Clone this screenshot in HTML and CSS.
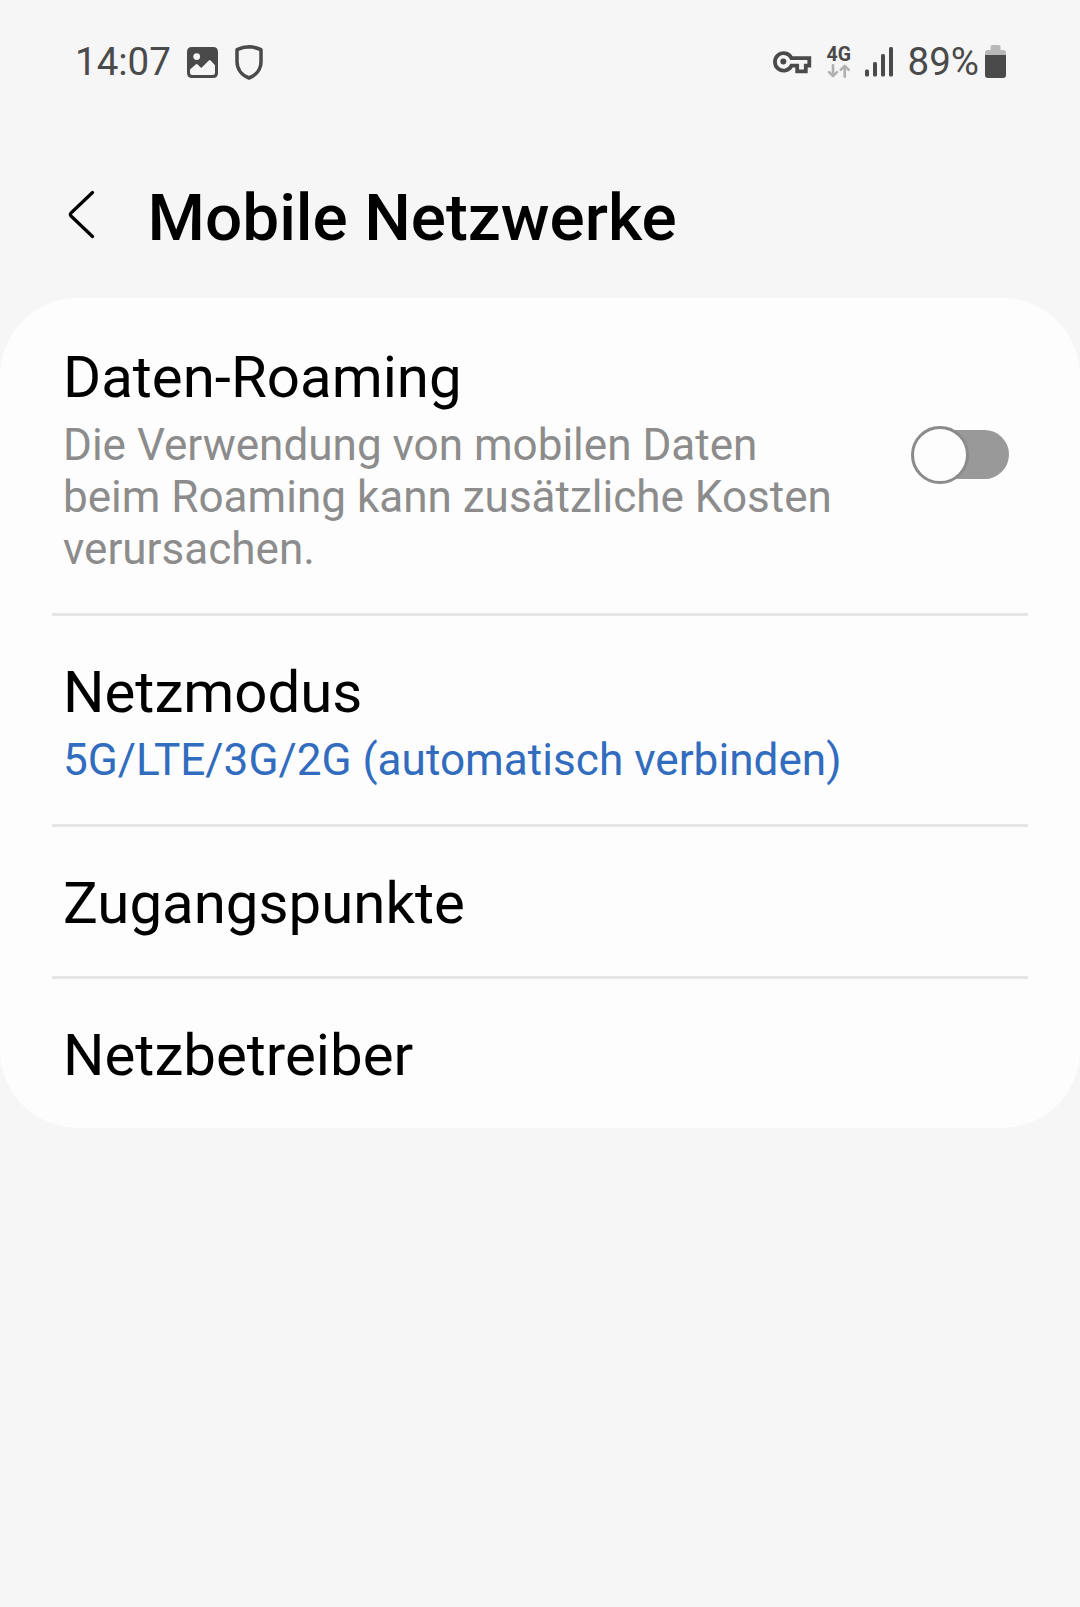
FILE: index.html
```html
<!DOCTYPE html>
<html lang="de">
<head>
<meta charset="utf-8">
<title>Mobile Netzwerke</title>
<link rel="stylesheet" href="styles.css">
</head>
<body>
<div class="status">
  <div class="status-left">
    <span class="clock">14:07</span>
    <svg class="icon-image" width="31" height="31" viewBox="0 0 31 31"><path fill="#4a4a4a" fill-rule="evenodd" d="M5 0H26Q31 0 31 5V26Q31 31 26 31H5Q0 31 0 26V5Q0 0 5 0ZM9.700 6.200a3.400 3.400 0 1 0 0 6.800a3.400 3.400 0 1 0 0-6.800ZM3 22.500V25.500Q3 28 5.500 28H25.500Q28 28 28 25.500V18.200L23.600 13.500Q22.700 12.700 21.800 13.500L14.300 21L10.700 17.500Q9.700 16.700 8.700 17.500Z"/></svg>
    <svg class="icon-shield" width="28" height="35" viewBox="0 0 28 35"><path fill="none" stroke="#4a4a4a" stroke-width="3.500" stroke-linejoin="round" d="M14 1.800Q20 1.900 26 4.700V16.500C26 24 21.500 30.200 14 33C6.500 30.200 2 24 2 16.500V4.700Q8 1.900 14 1.800Z"/></svg>
  </div>
  <div class="status-right">
    <svg class="icon-key" width="39" height="23" viewBox="0 0 39 23"><path fill="none" stroke="#4a4a4a" stroke-width="3.800" d="M18.500 7.200H36.300V14.600H32.800V20.300H24.200V14.600H18.500A8.700 8.700 0 1 1 18.500 7.200Z"/><circle cx="10.300" cy="10.600" r="3" fill="#4a4a4a"/></svg>
    <div class="network">
      <span class="network-type">4G</span>
      <svg width="24" height="14" viewBox="0 0 24 14" fill="none" stroke="#b0b0b0" stroke-width="2.600" stroke-linecap="round" stroke-linejoin="round"><path d="M6 1.300V12M2 8.200L6 12.200L10 8.200M17.700 12.700V2M13.700 5.800L17.700 1.800L21.700 5.800"/></svg>
    </div>
    <svg class="icon-signal" width="28" height="30" viewBox="0 0 28 30" fill="#4a4a4a"><rect y="22.500" width="4" height="7" rx="1.500"/><rect x="8" y="15" width="4" height="14.500" rx="1.500"/><rect x="16" y="7" width="4" height="22.500" rx="1.500"/><rect x="24" y="0" width="4" height="29.500" rx="1.500"/></svg>
    <span class="percent">89%</span>
    <svg class="icon-battery" width="21" height="33" viewBox="0 0 21 33"><path fill="#b8b8b8" d="M0 11V8Q0 5 3 5H5.500V2Q5.500 0 7.500 0H13.500Q15.500 0 15.500 2V5H18Q21 5 21 8V11Z"/><path fill="#4a4a4a" d="M0 10H21V30Q21 33 18 33H3Q0 33 0 30Z"/></svg>
  </div>
</div>
<header class="header">
  <svg class="back" width="28" height="50" viewBox="0 0 28 50"><path fill="none" stroke="#000" stroke-width="3.200" stroke-linecap="round" stroke-linejoin="round" d="M24.500 2.500L3 23Q1.700 24.500 3 26L24.500 46.500"/></svg>
  <h1 class="title">Mobile Netzwerke</h1>
</header>
<main class="card">
  <section class="row">
    <div class="row-text">
      <h2 class="row-title">Daten-Roaming</h2>
      <p class="row-sub">Die Verwendung von mobilen Daten beim Roaming kann zusätzliche Kosten verursachen.</p>
    </div>
    <div class="toggle"><div class="knob"></div></div>
  </section>
  <section class="row">
    <div class="row-text">
      <h2 class="row-title">Netzmodus</h2>
      <p class="row-sub row-value">5G/LTE/3G/2G (automatisch verbinden)</p>
    </div>
  </section>
  <section class="row row-single"><h2 class="row-title">Zugangspunkte</h2></section>
  <section class="row row-single"><h2 class="row-title">Netzbetreiber</h2></section>
</main>
</body>
</html>
```
FILE: styles.css
```css
* { box-sizing: border-box; }
body {
  margin: 0;
  min-height: 1607px;
  background: #f6f6f6;
  color: #000;
  font-family: Roboto, "Liberation Sans", sans-serif;
}
h1, h2, p { margin: 0; font-weight: 400; }
svg { display: block; flex: none; }

.status {
  display: flex;
  justify-content: space-between;
  height: 124px;
  padding: 39px 74px 0 75px;
  color: #4a4a4a;
}
.status-left, .status-right {
  display: flex;
  align-items: flex-start;
}
.clock, .percent { font-size: 38.5px; line-height: 46px; }
.icon-image { margin: 8px 0 0 16px; }
.icon-shield { margin: 6px 0 0 17px; }
.icon-key { margin: 12px 15px 0 0; }
.network { width: 25px; margin: 6px 13px 0 0; }
.network-type {
  display: block;
  height: 19px;
  font-size: 19.5px;
  font-weight: 700;
  line-height: 20px;
}
.icon-signal { margin: 8px 15px 0 0; }
.percent { margin-right: 6px; }
.icon-battery { margin-top: 6px; }

.header {
  display: flex;
  height: 174px;
  padding: 54px 0 0 68px;
}
.back { margin-top: 12px; }
.title {
  margin-left: 51.5px;
  font-size: 65.7px;
  font-weight: 500;
  line-height: 80px;
  white-space: nowrap;
}

.card {
  height: 830px;
  background: #fdfdfd;
  border-radius: 78px;
}
.row {
  display: flex;
  justify-content: space-between;
  margin: 0 52px;
  padding: 42px 19px 38px 11px;
  border-top: 3px solid #e6e6e6;
}
.row:first-child { border-color: transparent; }
.row-single { padding-bottom: 39px; }
.row-text { width: 790px; }
.row-title { font-size: 58.2px; line-height: 68px; white-space: nowrap; }
.row-sub {
  width: 785px;
  margin-top: 8px;
  color: #8c8c8c;
  font-size: 44.05px;
  line-height: 52px;
}
.row-value { width: auto; color: #316cbe; font-size: 44.15px; white-space: nowrap; }

.toggle {
  display: flex;
  align-items: center;
  width: 94px;
  height: 49px;
  margin-top: 87px;
  border-radius: 25px;
  background: linear-gradient(to right, transparent 35px, #999 35px);
}
.knob {
  flex: none;
  width: 58px;
  height: 58px;
  margin-left: -4px;
  border: 3px solid #8b8b8b;
  border-radius: 50%;
  background: #fdfdfd;
}
```
